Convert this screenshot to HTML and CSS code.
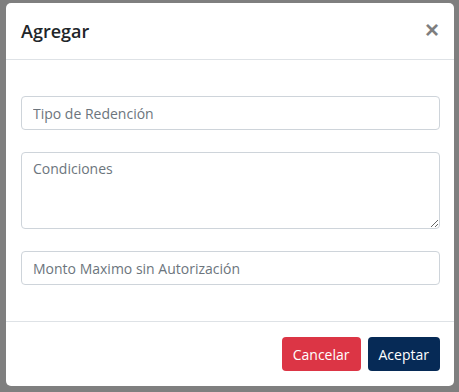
FILE: index.html
```html
<!DOCTYPE html>
<html lang="es">
<head>
    <meta charset="UTF-8">
    <meta name="viewport" content="width=device-width, initial-scale=1.0">
    <title>Agregar</title>
    <link rel="stylesheet" href="styles.css">
</head>
<body>
    <div class="modal">
        <div class="modal-header">
            <h5 class="modal-title">Agregar</h5>
            <button type="button" class="close">&times;</button>
        </div>
        <div class="modal-body">
            <input type="text" class="form-control" placeholder="Tipo de Redención">
            <textarea class="form-control" placeholder="Condiciones"></textarea>
            <input type="text" class="form-control" placeholder="Monto Maximo sin Autorización">
        </div>
        <div class="modal-footer">
            <button type="button" class="btn btn-danger">Cancelar</button>
            <button type="button" class="btn btn-primary">Aceptar</button>
        </div>
    </div>
</body>
</html>
```

FILE: styles.css
```css
body {
    margin: 0;
    padding: 3px 5px 6px 6px;
    background-color: #7f7f7f;
    font-family: "Open Sans", "Noto Sans", sans-serif;
    color: #212529;
}
.modal {
    width: 448px;
    box-sizing: border-box;
    background: #fff;
    border-radius: 5px;
}
.modal-header {
    display: flex;
    align-items: center;
    justify-content: space-between;
    height: 57px;
    box-sizing: border-box;
    padding: 0 15px;
    border-bottom: 1px solid #dee2e6;
}
.modal-title {
    margin: 0;
    font-size: 18px;
    font-weight: 600;
    color: #212529;
}
.close {
    background: none;
    border: 0;
    padding: 0 0 2px 0;
    font-size: 24px;
    font-weight: 700;
    line-height: 1;
    color: #000;
    opacity: .5;
    cursor: pointer;
}
.modal-body {
    display: flex;
    flex-direction: column;
    gap: 22px;
    padding: 36px 14px 36px 15px;
}
.form-control {
    display: block;
    width: 100%;
    box-sizing: border-box;
    height: 34px;
    padding: 6px 11px;
    font-family: inherit;
    font-size: 14px;
    color: #495057;
    border: 1px solid #ced4da;
    border-radius: 4px;
    outline: none;
}
textarea.form-control {
    height: 77px;
    resize: vertical;
}
.form-control::placeholder {
    color: #6c757d;
}
.modal-footer {
    display: flex;
    justify-content: flex-end;
    gap: 7px;
    padding: 15px 14px 15px 15px;
    border-top: 1px solid #dee2e6;
}
.btn {
    height: 34px;
    padding: 0 11px;
    font-family: inherit;
    font-size: 14px;
    color: #fff;
    border: 0;
    border-radius: 4px;
    cursor: pointer;
}
.btn-danger {
    background-color: #dc3545;
}
.btn-primary {
    background-color: #062a56;
}
```
